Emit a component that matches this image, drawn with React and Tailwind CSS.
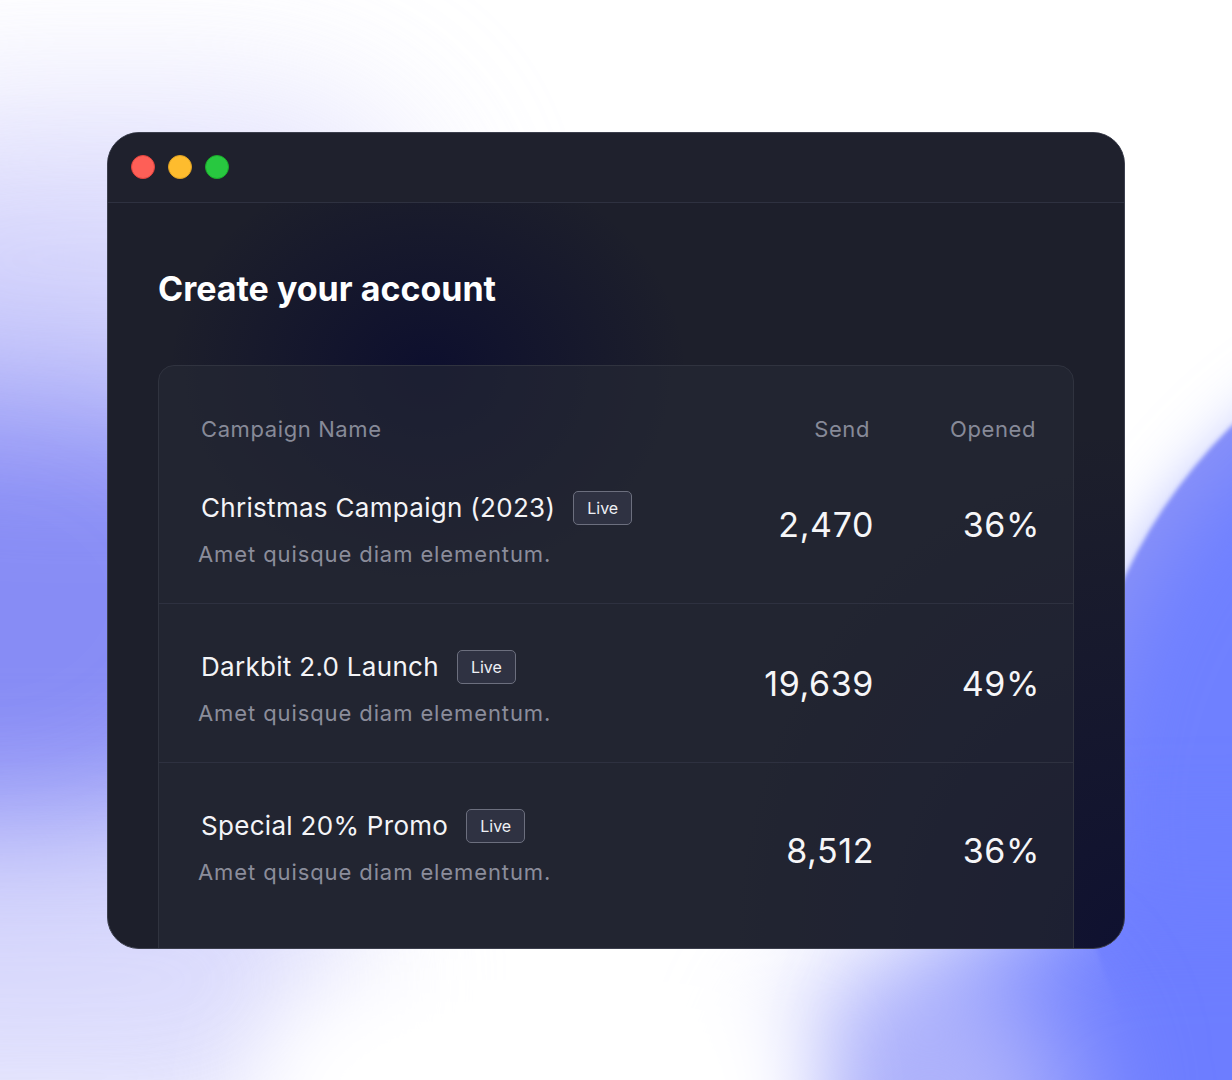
import React from 'react';

const ROWS = [
  { name: 'Christmas Campaign (2023)', send: '2,470', opened: '36%', pt: 'pt-[47px]', numTop: 'mt-[14px]' },
  { name: 'Darkbit 2.0 Launch', send: '19,639', opened: '49%', pt: 'pt-[46px]', numTop: 'mt-[14px]' },
  { name: 'Special 20% Promo', send: '8,512', opened: '36%', pt: 'pt-[46px]', numTop: 'mt-[22px]' },
];

function Row({ row, last }) {
  return (
    <div className={`flex items-start pl-[42px] pr-[37px] ${row.pt} pb-[34px] ${last ? '' : 'border-b border-[#2e3140]'}`}>
      <div className="flex-1 min-w-0">
        <div className="flex items-center gap-[18px] h-[34px]">
          <span className="text-[26px] leading-[32px] tracking-[0.3px] text-[#f4f4f7]">{row.name}</span>
          <span className="flex items-center justify-center h-[34px] px-[13px] rounded-[5px] border-[1.5px] border-[#6c6f7e] bg-[#2f3242] text-[16px] text-[#eef0f5]">
            Live
          </span>
        </div>
        <p className="-ml-[3px] mt-[14px] text-[22px] leading-[30px] tracking-[0.9px] text-[#8b8d9b]">
          Amet quisque diam elementum.
        </p>
      </div>
      <div className={`w-[140px] -mr-[4px] text-right text-[34px] leading-[40px] tracking-[0.6px] text-[#f6f6f8] ${row.numTop}`}>{row.send}</div>
      <div className={`w-[170px] -mr-[4px] text-right text-[34px] leading-[40px] tracking-[0.6px] text-[#f6f6f8] ${row.numTop}`}>{row.opened}</div>
    </div>
  );
}

export default function App() {
  return (
    <div
      className="relative h-[1080px] w-full overflow-hidden bg-white"
      style={{ fontFamily: 'Inter, "Noto Sans", sans-serif' }}
    >
      {/* background glows */}
      <div className="absolute left-[-420px] top-[290px] h-[620px] w-[760px] rounded-full bg-[#7b80f4] opacity-90 blur-[90px]" />
      <div className="absolute left-[-200px] top-[100px] h-[320px] w-[620px] rounded-full bg-[#d4d3fc] opacity-70 blur-[80px]" />
      <div className="absolute left-[-260px] top-[820px] h-[320px] w-[620px] rounded-full bg-[#d6d6fc] opacity-80 blur-[70px]" />
      <div className="absolute left-[1075px] top-[275px] h-[1050px] w-[1050px] rounded-full bg-[#8b93f8] blur-[2px]" />
      <div className="absolute left-[1090px] top-[320px] h-[1000px] w-[1000px] rounded-full bg-[#6f80ff] blur-[40px]" />
      <div className="absolute left-[900px] top-[880px] h-[460px] w-[700px] rounded-full bg-[#6d7dff] blur-[60px]" />
      <div className="absolute left-[780px] top-[960px] h-[300px] w-[300px] rounded-full bg-[#aeb2fb] blur-[60px]" />
      <div className="absolute left-[250px] top-[980px] h-[240px] w-[560px] rounded-full bg-white blur-[50px]" />

      <div className="relative flex h-full items-center justify-center">
        <div className="flex h-[817px] w-[1018px] flex-col overflow-hidden rounded-[32px] border border-[#3c3f4d] bg-[#1d1f2b] bg-[radial-gradient(ellipse_260px_220px_at_320px_240px,#0d0f2e_0%,transparent_100%),radial-gradient(ellipse_420px_520px_at_1018px_817px,#0f1130_0%,transparent_100%)]">
          <div className="flex h-[70px] shrink-0 items-center gap-[13px] border-b border-[#2e3140] bg-[#1f212d] pl-[23px]">
            <span className="h-[24px] w-[24px] rounded-full border border-[#e0443e] bg-[#fe5f57]" />
            <span className="h-[24px] w-[24px] rounded-full border border-[#dea123] bg-[#febc2e]" />
            <span className="h-[24px] w-[24px] rounded-full border border-[#1aab29] bg-[#28c840]" />
          </div>

          <div className="flex flex-1 flex-col px-[50px] pt-[66px]">
            <h1 className="text-[34px] font-bold leading-[40px] text-white">Create your account</h1>
            <div className="mt-[56px] -mb-[40px] flex-1 rounded-t-[16px] border border-[#30333f] bg-[#262935]/60 pt-[48px]">
              <div className="flex items-center pl-[42px] pr-[37px] text-[22px] leading-[30px] tracking-[0.6px] text-[#878a98]">
                <div className="flex-1">Campaign Name</div>
                <div className="w-[140px] text-right">Send</div>
                <div className="w-[166px] text-right">Opened</div>
              </div>
              {ROWS.map((row, i) => (
                <Row key={row.name} row={row} last={i === ROWS.length - 1} />
              ))}
            </div>
          </div>
        </div>
      </div>
    </div>
  );
}
